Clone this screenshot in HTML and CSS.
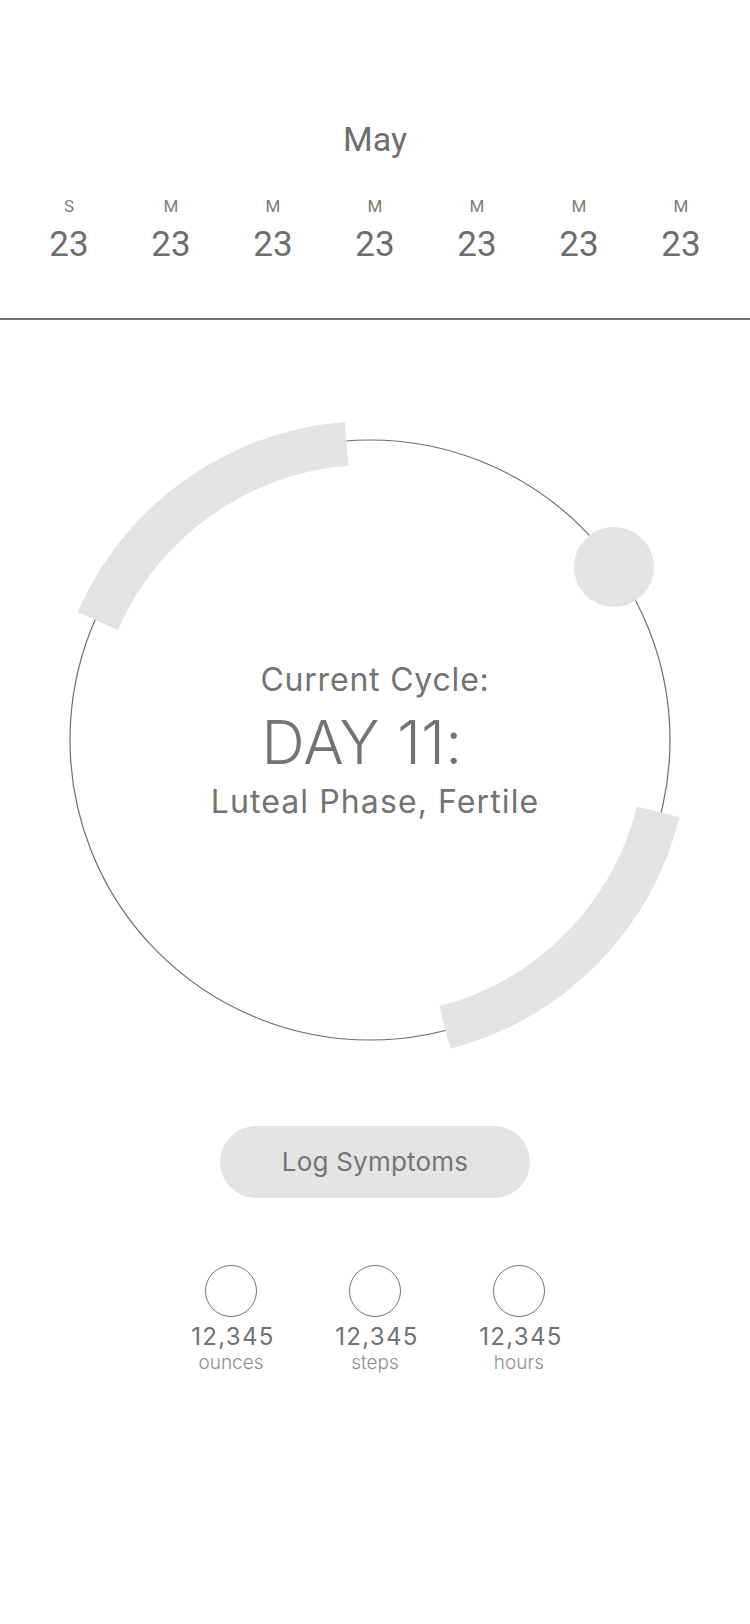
FILE: index.html
```html
<!DOCTYPE html>
<html lang="en">
<head>
<meta charset="utf-8">
<title>Cycle</title>
<link rel="stylesheet" href="styles.css">
</head>
<body>
<header class="calendar">
  <div class="month">May</div>
  <div class="week">
    <div class="day"><span class="dow">S</span><span class="date">23</span></div>
    <div class="day"><span class="dow">M</span><span class="date">23</span></div>
    <div class="day"><span class="dow">M</span><span class="date">23</span></div>
    <div class="day"><span class="dow">M</span><span class="date">23</span></div>
    <div class="day"><span class="dow">M</span><span class="date">23</span></div>
    <div class="day"><span class="dow">M</span><span class="date">23</span></div>
    <div class="day"><span class="dow">M</span><span class="date">23</span></div>
  </div>
</header>
<div class="divider"></div>
<section class="cycle">
  <svg class="ring" width="750" height="760" viewBox="0 0 750 760" aria-hidden="true">
    <circle cx="370" cy="420" r="300" fill="none" stroke="#6e6e6e" stroke-width="1.2"/>
    <path d="M 97.8 301.1 A 297 297 0 0 1 346.7 123.9" fill="none" stroke="#e4e4e4" stroke-width="44"/>
    <path d="M 658.2 491.9 A 297 297 0 0 1 444.9 707.4" fill="none" stroke="#e4e4e4" stroke-width="44"/>
    <circle cx="614" cy="247" r="40" fill="#e4e4e4"/>
  </svg>
  <div class="cycle-text">
    <p class="cycle-label">Current Cycle:</p>
    <p class="cycle-day">DAY 11:</p>
    <p class="cycle-phase">Luteal Phase, Fertile</p>
  </div>
</section>
<div class="actions">
  <button class="log-btn" type="button">Log Symptoms</button>
</div>
<section class="stats">
  <div class="stat"><span class="stat-icon"></span><span class="stat-value">12,345</span><span class="stat-unit">ounces</span></div>
  <div class="stat"><span class="stat-icon"></span><span class="stat-value">12,345</span><span class="stat-unit">steps</span></div>
  <div class="stat"><span class="stat-icon"></span><span class="stat-value">12,345</span><span class="stat-unit">hours</span></div>
</section>
</body>
</html>
```
FILE: styles.css
```css
* { box-sizing: border-box; }
html, body { margin: 0; padding: 0; background: #ffffff; }
body {
  width: 750px;
  min-height: 1624px;
  color: #707070;
  font-family: Inter, "Noto Sans", sans-serif;
}
p { margin: 0; }

.calendar {
  padding-top: 119px;
  font-family: Roboto, "Liberation Sans", sans-serif;
}
.month {
  height: 40px;
  line-height: 40px;
  font-size: 34px;
  text-align: center;
  color: #6e6e6e;
}
.week {
  margin-top: 37px;
  display: grid;
  grid-template-columns: repeat(7, 102px);
  justify-content: center;
}
.day {
  display: flex;
  flex-direction: column;
  align-items: center;
}
.dow {
  height: 20px;
  line-height: 20px;
  font-size: 17px;
  color: #7c7c7c;
}
.date {
  margin-top: 9px;
  height: 40px;
  line-height: 40px;
  font-size: 35px;
  color: #6e6e6e;
}

.divider {
  margin-top: 53px;
  height: 2px;
  background: #737373;
}

.cycle {
  display: grid;
  height: 760px;
}
.ring, .cycle-text { grid-area: 1 / 1; }
.ring { display: block; }
.cycle-text {
  padding-top: 341px;
  display: flex;
  flex-direction: column;
  align-items: center;
  color: #737373;
}
.cycle-label {
  font-size: 32px;
  line-height: 38px;
  letter-spacing: 0.8px;
}
.cycle-day {
  margin-top: 11px;
  margin-right: 26px;
  font-size: 60px;
  line-height: 64px;
  font-weight: 300;
  letter-spacing: 0.4px;
}
.cycle-phase {
  margin-top: 9px;
  font-size: 32px;
  line-height: 38px;
  letter-spacing: 1.1px;
}

.actions {
  margin-top: 46px;
  display: flex;
  justify-content: center;
}
.log-btn {
  width: 310px;
  height: 72px;
  border: 0;
  border-radius: 36px;
  background: #e4e4e4;
  color: #757575;
  font-family: Inter, "Noto Sans", sans-serif;
  font-size: 26px;
  line-height: 30px;
  letter-spacing: 0.2px;
  padding: 0;
}

.stats {
  margin-top: 67px;
  display: grid;
  grid-template-columns: repeat(3, 144px);
  justify-content: center;
}
.stat {
  display: flex;
  flex-direction: column;
  align-items: center;
}
.stat-icon {
  width: 52px;
  height: 52px;
  border: 1.5px solid #777777;
  border-radius: 50%;
}
.stat-value {
  margin-top: 6px;
  padding-left: 4px;
  font-size: 24px;
  line-height: 28px;
  letter-spacing: 1.3px;
  color: #727272;
}
.stat-unit {
  margin-top: 1px;
  font-size: 19px;
  line-height: 22px;
  color: #909090;
  font-weight: 300;
}
```
